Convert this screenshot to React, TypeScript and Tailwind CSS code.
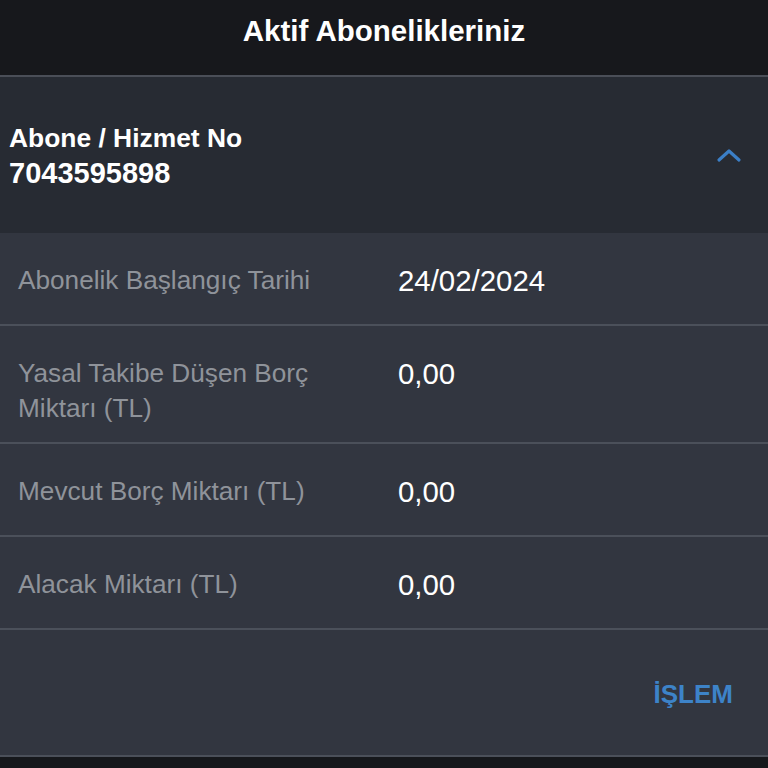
import React from "react";

const rows: { label: string[]; value: string }[] = [
  { label: ["Abonelik Başlangıç Tarihi"], value: "24/02/2024" },
  { label: ["Yasal Takibe Düşen Borç", "Miktarı (TL)"], value: "0,00" },
  { label: ["Mevcut Borç Miktarı (TL)"], value: "0,00" },
  { label: ["Alacak Miktarı (TL)"], value: "0,00" },
];

export default function App() {
  return (
    <div
      className="w-[768px] h-[768px] overflow-hidden bg-[#16181c] flex flex-col"
      style={{ fontFamily: '"Liberation Sans", Arial, sans-serif' }}
    >
      <div className="h-[75px] shrink-0 bg-[#17181c] flex justify-center pt-[12px]">
        <h1 className="text-white font-bold text-[29.5px] leading-[38px]">Aktif Abonelikleriniz</h1>
      </div>
      <div className="border-t-2 border-[#4a4e57] bg-[#272b33] h-[158px] shrink-0 flex items-center justify-between pl-[9px] pr-[26px]">
        <div className="text-white font-bold leading-[35px] pt-[2px]">
          <div className="text-[26.4px]">Abone / Hizmet No</div>
          <div className="text-[29px]">7043595898</div>
        </div>
        <svg width="26" height="16" viewBox="0 0 26 16" fill="none">
          <path d="M3 13 L13 4 L23 13" stroke="#3b7fc7" strokeWidth="3.2" strokeLinecap="round" strokeLinejoin="round" />
        </svg>
      </div>
      <div className="bg-[#323640] shrink-0">
        {rows.map((r, i) => (
          <div
            key={i}
            className="min-h-[93px] box-border border-b-2 border-[#4b505a] flex pt-[30px] pb-[16px]"
          >
            <div className="w-[398px] pl-[18px] text-[#8f939a] text-[26.2px] leading-[35px]">
              {r.label.map((l, j) => (
                <div key={j}>{l}</div>
              ))}
            </div>
            <div className="text-white text-[29.4px] leading-[35px]">{r.value}</div>
          </div>
        ))}
        <div className="h-[127px] box-border border-b-2 border-[#4b505a] flex items-center justify-end pr-[35px] pt-[4px]">
          <span className="text-[#3d83c8] font-bold text-[26px] leading-[35px]">İŞLEM</span>
        </div>
      </div>
    </div>
  );
}
